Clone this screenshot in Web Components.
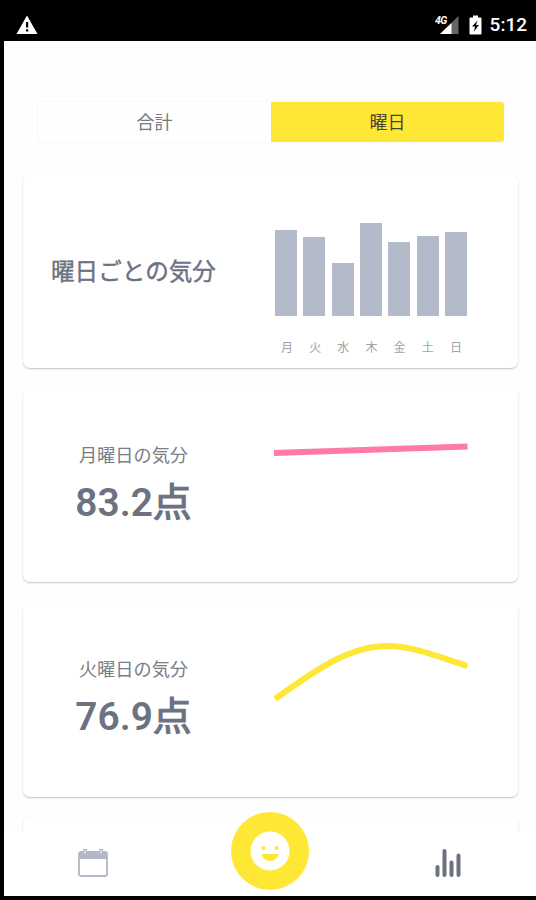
<!DOCTYPE html>
<html lang="ja">
<head>
<meta charset="utf-8">
<title>曜日ごとの気分</title>
<style>
  body {
    margin: 0;
    background: #000;
    font-family: Roboto, "Noto Sans CJK JP", sans-serif;
  }
</style>
</head>
<body>
<mood-app></mood-app>

<script>
class StatusBar extends HTMLElement {
  constructor() {
    super();
    this.attachShadow({ mode: "open" });
    this.shadowRoot.innerHTML = `
      <style>
        :host {
          display: flex;
          align-items: center;
          justify-content: space-between;
          box-sizing: border-box;
          height: 41px;
          padding: 8px 9px 0 12px;
          background: #000;
          color: #fff;
        }
        .right { display: flex; align-items: center; }
        svg { display: block; }
        .battery { margin: 0 8px 0 10px; }
        .time { font-size: 19px; line-height: 24px; font-weight: 500; padding-top: 1px; }
        .net { font: italic 700 10.500px Roboto, sans-serif; letter-spacing: -0.5px; }
      </style>
      <svg width="22" height="20" viewBox="0 0 22 20">
        <path d="M11 .5 21.5 19H.5z" fill="#fff"/>
        <path d="M10 7h2.2v5.5H10zM10 14.2h2.2v2.3H10z" fill="#000"/>
      </svg>
      <div class="right">
        <svg width="24" height="22" viewBox="0 0 24 22">
          <path d="M23.5 2v18H5z" fill="#666"/>
          <path d="M16.5 9v11H5z" fill="#fff"/>
          <text class="net" x="0" y="10" fill="#fff" stroke="#000" stroke-width="1.5" paint-order="stroke">4G</text>
        </svg>
        <svg class="battery" width="13" height="20" viewBox="0 0 13 20">
          <path d="M4 .5h5v2h2.5q1 0 1 1V18.500q0 1-1 1h-10q-1 0-1-1V3.500q0-1 1-1H4z" fill="#fff"/>
          <path d="M8.500 5.500 3 11.500h3l-1 5 5-6.500H7z" fill="#000"/>
        </svg>
        <span class="time"><slot></slot></span>
      </div>
    `;
  }
}

class TabSwitch extends HTMLElement {
  connectedCallback() {
    this.attachShadow({ mode: "open" });
    const labels = this.getAttribute("labels").split(",");
    const active = Number(this.getAttribute("active"));
    this.shadowRoot.innerHTML = `
      <style>
        :host {
          display: flex;
          box-sizing: border-box;
          height: 42px;
          border: 1px solid #f8f8f8;
          border-radius: 4px;
          overflow: hidden;
        }
        div {
          flex: 1;
          display: flex;
          align-items: center;
          justify-content: center;
          padding-bottom: 2px;
          font-size: 18px;
          color: #77797f;
        }
        .active { background: #ffe736; color: #49452c; }
      </style>
      ${labels.map((l, i) => `<div class="${i === active ? "active" : ""}">${l}</div>`).join("")}
    `;
  }
}

class MoodCard extends HTMLElement {
  constructor() {
    super();
    this.attachShadow({ mode: "open" });
    this.shadowRoot.innerHTML = `
      <style>
        :host {
          display: flex;
          flex: none;
          box-sizing: border-box;
          height: 194px;
          background: #fff;
          border-radius: 7px;
          box-shadow: 0 1px 2px rgba(0, 0, 0, 0.2), 0 1px 1px rgba(0, 0, 0, 0.04);
        }
        .text {
          width: 221px;
          display: flex;
          flex-direction: column;
          align-items: center;
          justify-content: center;
        }
        .chart { padding-left: 30px; }
      </style>
      <div class="text"><slot></slot></div>
      <div class="chart"><slot name="chart"></slot></div>
    `;
  }
}

class DayScore extends HTMLElement {
  connectedCallback() {
    this.attachShadow({ mode: "open" });
    this.shadowRoot.innerHTML = `
      <style>
        :host {
          display: flex;
          flex-direction: column;
          align-items: center;
          padding-bottom: 2px;
          color: #6d7280;
        }
        .day { font-size: 18.2px; line-height: 26px; color: #7a7d85; }
        .score { font-size: 38.800px; line-height: 46px; margin-top: 11px; font-weight: 600; }
        .unit { font-weight: 400; -webkit-text-stroke: 1.2px #6d7280; }
      </style>
      <span class="day">${this.getAttribute("day")}曜日の気分</span>
      <span class="score">${this.getAttribute("score")}<span class="unit">点</span></span>
    `;
  }
}

class WeekBars extends HTMLElement {
  connectedCallback() {
    this.attachShadow({ mode: "open" });
    const values = this.getAttribute("values").split(",");
    const days = ["月", "火", "水", "木", "金", "土", "日"];
    this.shadowRoot.innerHTML = `
      <style>
        :host { display: block; width: 192px; padding: 42px 0 0 1px; }
        .row { display: flex; justify-content: space-between; align-items: flex-end; }
        .bars { height: 100px; }
        .bars div { width: 22px; background: #b3bac9; }
        .days { margin-top: 24px; padding-left: 1px; }
        .days span {
          width: 22px;
          text-align: center;
          font-size: 12px;
          line-height: 16px;
          color: #a0a2a6;
        }
      </style>
      <div class="row bars">${values.map((v) => `<div style="height:${v}px"></div>`).join("")}</div>
      <div class="row days">${days.map((d) => `<span>${d}</span>`).join("")}</div>
    `;
  }
}

// line chart, path is given in the chart's own 194x194 box
class TrendLine extends HTMLElement {
  connectedCallback() {
    this.attachShadow({ mode: "open" });
    this.shadowRoot.innerHTML = `
      <style>
        :host { display: block; }
        svg { display: block; }
      </style>
      <svg width="194" height="194" viewBox="0 0 194 194">
        <path d="${this.getAttribute("path")}" fill="none"
          stroke="${this.getAttribute("color")}" stroke-width="6"/>
      </svg>
    `;
  }
}

class NavBar extends HTMLElement {
  constructor() {
    super();
    this.attachShadow({ mode: "open" });
    this.shadowRoot.innerHTML = `
      <style>
        :host {
          display: grid;
          grid-template-columns: 177px 1fr 177px;
          justify-items: center;
          align-items: center;
          box-sizing: border-box;
          flex: none;
          height: 64px;
          padding-bottom: 2px;
          background: #fff;
          position: relative;
        }
        svg { display: block; }
        .mood { margin-top: -24px; }
      </style>
      <svg width="30" height="28" viewBox="0 0 30 28">
        <rect x="1" y="3" width="28" height="24" rx="2" fill="#fff" stroke="#b3b7c7" stroke-width="1.8"/>
        <path d="M1 10V5q0-2 2-2h24q2 0 2 2v5z" fill="#b3b7c7"/>
        <path d="M7 0v3M23 0v3" stroke="#b3b7c7" stroke-width="4"/>
        <path d="M7 1v3.500M23 1v3.500" stroke="#e4e6ed" stroke-width="1.6"/>
      </svg>
      <svg class="mood" width="78" height="78" viewBox="0 0 78 78">
        <circle cx="39" cy="39" r="39" fill="#ffe736"/>
        <circle cx="39" cy="39" r="19.500" fill="#fff"/>
        <circle cx="32.500" cy="36" r="2" fill="#ffe736"/>
        <circle cx="45.500" cy="36" r="2" fill="#ffe736"/>
        <path d="M30.500 42h17q-1.500 7-8.500 7t-8.500-7z" fill="#ffe736"/>
      </svg>
      <svg width="26" height="28" viewBox="0 0 26 28">
        <path d="M2.500 26V18M9.500 26V2M16.500 26V13.500M23.500 26V6.500"
          stroke="#6d7280" stroke-width="4" stroke-linecap="round"/>
      </svg>
    `;
  }
}

class MoodApp extends HTMLElement {
  constructor() {
    super();
    this.attachShadow({ mode: "open" });
    this.shadowRoot.innerHTML = `
      <style>
        :host {
          display: flex;
          flex-direction: column;
          box-sizing: border-box;
          height: 900px;
          padding: 0 0 4px 4px;
        }
        main {
          flex: 1;
          min-height: 0;
          overflow: hidden;
          background: #fefefe;
          padding: 60px 18px 0 19px;
        }
        tab-switch { margin: 0 13px 0 14px; }
        .cards { display: flex; flex-direction: column; gap: 20.300px; padding-top: 31px; }
        h1 {
          margin: 0;
          padding-top: 2px;
          font-size: 23.600px;
          line-height: 34px;
          font-weight: 400;
          -webkit-text-stroke: 0.4px #6d7280;
          color: #6d7280;
          white-space: nowrap;
        }
      </style>
      <status-bar>5:12</status-bar>
      <main>
        <tab-switch labels="合計,曜日" active="1"></tab-switch>
        <div class="cards">
          <mood-card>
            <h1>曜日ごとの気分</h1>
            <week-bars slot="chart" values="86,79.500,53.500,93,74,80,84.500"></week-bars>
          </mood-card>
          <mood-card>
            <day-score day="月" score="83.2"></day-score>
            <trend-line slot="chart" color="#ff7aa5" path="M0 65 193.500 58.500"></trend-line>
          </mood-card>
          <mood-card>
            <day-score day="火" score="76.9"></day-score>
            <trend-line slot="chart" color="#ffe736" path="M1 96C40 68 75 43 113 43C139 43 165 54 193.500 63"></trend-line>
          </mood-card>
          <mood-card></mood-card>
        </div>
      </main>
      <nav-bar></nav-bar>
    `;
  }
}

customElements.define("status-bar", StatusBar);
customElements.define("tab-switch", TabSwitch);
customElements.define("mood-card", MoodCard);
customElements.define("day-score", DayScore);
customElements.define("week-bars", WeekBars);
customElements.define("trend-line", TrendLine);
customElements.define("nav-bar", NavBar);
customElements.define("mood-app", MoodApp);
</script>
</body>
</html>
